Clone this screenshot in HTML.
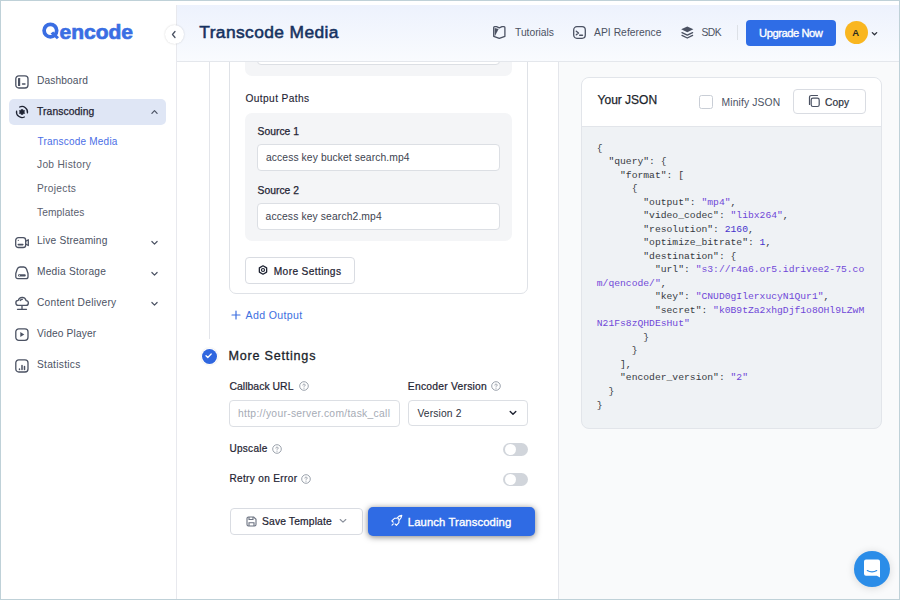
<!DOCTYPE html>
<html><head><meta charset="utf-8"><style>
html,body{margin:0;padding:0;width:900px;height:600px;overflow:hidden;background:#fff}
body{position:relative;font-family:"Liberation Sans",sans-serif}
.t{position:absolute;white-space:nowrap;line-height:1;font-family:"Liberation Sans",sans-serif}
svg{overflow:visible}
</style></head><body>
<div style="position:absolute;left:0px;top:0px;width:900px;height:600px;background:#fff"></div>
<div style="position:absolute;left:176px;top:5px;width:1px;height:594px;background:#e8e9ee"></div>
<div style="position:absolute;left:559px;top:62px;width:340px;height:537px;background:#f9fafb"></div>
<div style="position:absolute;left:558px;top:62px;width:1px;height:537px;background:#e4e6eb"></div>
<div style="position:absolute;left:0px;top:0px;width:900px;height:1px;background:#bfd1d8"></div>
<div style="position:absolute;left:0px;top:599px;width:900px;height:1px;background:#bfd1d8"></div>
<div style="position:absolute;left:0px;top:0px;width:1px;height:600px;background:#bfd1d8"></div>
<div style="position:absolute;left:899px;top:0px;width:1px;height:600px;background:#bfd1d8"></div>
<svg style="position:absolute;left:41px;top:21px" width="20" height="20" viewBox="0 0 20 20"><circle cx="9.4" cy="9.6" r="6.3" fill="none" stroke="#3a6ee3" stroke-width="3.7"/><path d="M9.6 12.6L12.2 10.4 18 16.2 15.9 18.2z" fill="#3a6ee3"/><path d="M9.6 12.6L12.2 10.4" stroke="#fff" stroke-width="0" /></svg>
<div class="t" style="left:59.6px;top:21px;font-size:21.0px;color:#3a6ee3;font-weight:bold;letter-spacing:-0.044px;-webkit-text-stroke:0.7px #3a6ee3;">encode</div>
<div style="position:absolute;left:9px;top:99px;width:157px;height:26px;background:#dfe6f5;border-radius:5px"></div>
<div class="t" style="left:37px;top:76px;font-size:10.2px;color:#4b5263;font-weight:normal;letter-spacing:0.125px;">Dashboard</div>
<div class="t" style="left:37px;top:236px;font-size:10.2px;color:#4b5263;font-weight:normal;letter-spacing:0.182px;">Live Streaming</div>
<div class="t" style="left:37px;top:267px;font-size:10.2px;color:#4b5263;font-weight:normal;letter-spacing:0.222px;">Media Storage</div>
<div class="t" style="left:37px;top:298px;font-size:10.2px;color:#4b5263;font-weight:normal;letter-spacing:0.260px;">Content Delivery</div>
<div class="t" style="left:37px;top:329px;font-size:10.2px;color:#4b5263;font-weight:normal;letter-spacing:0.141px;">Video Player</div>
<div class="t" style="left:37px;top:360px;font-size:10.2px;color:#4b5263;font-weight:normal;letter-spacing:0.277px;">Statistics</div>
<div class="t" style="left:37.1px;top:107px;font-size:10.3px;color:#1f2433;font-weight:normal;letter-spacing:0.080px;-webkit-text-stroke:0.25px #1f2433;">Transcoding</div>
<div class="t" style="left:37.5px;top:137px;font-size:10.0px;color:#4a6ee6;font-weight:normal;letter-spacing:0.215px;">Transcode Media</div>
<div class="t" style="left:37px;top:160px;font-size:10.2px;color:#5a606e;font-weight:normal;letter-spacing:0.298px;">Job History</div>
<div class="t" style="left:37px;top:184px;font-size:10.2px;color:#5a606e;font-weight:normal;letter-spacing:0.293px;">Projects</div>
<div class="t" style="left:37px;top:208px;font-size:10.2px;color:#5a606e;font-weight:normal;letter-spacing:0.114px;">Templates</div>
<svg style="position:absolute;left:15px;top:75px" width="14" height="14" viewBox="0 0 14 14"><rect x="0.8" y="0.8" width="12.2" height="12.2" rx="3" fill="none" stroke="#4b5263" stroke-width="1.3" stroke-linecap="round" stroke-linejoin="round"/><rect x="3" y="3" width="2.2" height="8" rx="0.6" fill="#4b5263"/><path d="M7.5 9h2.5" fill="none" stroke="#4b5263" stroke-width="1.3" stroke-linecap="round" stroke-linejoin="round"/></svg>
<svg style="position:absolute;left:15px;top:105.3px" width="14" height="14" viewBox="0 0 14 14"><path d="M4.68 2.02A5.5 5.5 0 0 1 12.42 7.96M1.58 6.04A5.5 5.5 0 0 0 9.32 11.98" fill="none" stroke="#1f2433" stroke-width="1.3" stroke-linecap="round"/><path d="M7.00 4.00 L8.05 5.18 L9.60 5.50 L9.10 7.00 L9.60 8.50 L8.05 8.82 L7.00 10.00 L5.95 8.82 L4.40 8.50 L4.90 7.00 L4.40 5.50 L5.95 5.18Z" fill="#1f2433" stroke="#1f2433" stroke-width="0.6" stroke-linejoin="round"/></svg>
<svg style="position:absolute;left:15px;top:237px" width="14" height="11" viewBox="0 0 14 11"><rect x="0.7" y="0.7" width="10" height="9.8" rx="2.6" fill="none" stroke="#4b5263" stroke-width="1.3" stroke-linecap="round" stroke-linejoin="round"/><path d="M10.7 4.2l2.6-1.5v5.8l-2.6-1.5" fill="none" stroke="#4b5263" stroke-width="1.3" stroke-linecap="round" stroke-linejoin="round"/><path d="M3.3 7.6h4.5" fill="none" stroke="#4b5263" stroke-width="1.6" stroke-linecap="round"/><circle cx="3.3" cy="3.3" r="0.6" fill="#4b5263"/></svg>
<svg style="position:absolute;left:15px;top:266px" width="14" height="14" viewBox="0 0 14 14"><path d="M0.8 7.5L2.2 3.2C2.7 1.7 3.6 1 5 1h3.8c1.4 0 2.3.7 2.8 2.2L13 7.5v3.2a2 2 0 0 1-2 2H2.8a2 2 0 0 1-2-2z" fill="none" stroke="#4b5263" stroke-width="1.3" stroke-linecap="round" stroke-linejoin="round"/><rect x="3" y="8.3" width="7.8" height="2.2" rx="1.1" fill="#4b5263"/><circle cx="4.4" cy="9.4" r="0.5" fill="#fff"/></svg>
<svg style="position:absolute;left:15px;top:297px" width="14" height="14" viewBox="0 0 14 14"><path d="M3.4 8.4h7.4a2.4 2.4 0 0 0 .3-4.8A4 4 0 0 0 3.3 3.4a2.5 2.5 0 0 0 .1 5z" fill="none" stroke="#4b5263" stroke-width="1.3" stroke-linecap="round" stroke-linejoin="round"/><path d="M5.3 3.4c.5-.8 1.2-1.2 2-1.2" fill="none" stroke="#4b5263" stroke-width="1.5" stroke-linecap="round"/><path d="M7 8.6v3.4M2.5 12.3h9" fill="none" stroke="#4b5263" stroke-width="1.3" stroke-linecap="round" stroke-linejoin="round"/></svg>
<svg style="position:absolute;left:15px;top:328px" width="14" height="13" viewBox="0 0 14 13"><rect x="0.8" y="0.8" width="12.2" height="11.5" rx="3" fill="none" stroke="#4b5263" stroke-width="1.3" stroke-linecap="round" stroke-linejoin="round"/><path d="M5.3 4v5l4-2.5z" fill="#4b5263"/></svg>
<svg style="position:absolute;left:15px;top:359px" width="14" height="14" viewBox="0 0 14 14"><rect x="0.8" y="0.8" width="12.2" height="12.2" rx="3" fill="none" stroke="#4b5263" stroke-width="1.3" stroke-linecap="round" stroke-linejoin="round"/><path d="M4.5 10.5v-0.5M7 10.5v-4M9.5 10.5v-3" fill="none" stroke="#4b5263" stroke-width="1.5" stroke-linecap="round"/></svg>
<svg style="position:absolute;left:150.5px;top:109px" width="7" height="6" viewBox="0 0 7 6"><path d="M0.9 4.3L3.5 1.7l2.6 2.6" fill="none" stroke="#4b5263" stroke-width="1.2" stroke-linecap="round" stroke-linejoin="round"/></svg>
<svg style="position:absolute;left:150.5px;top:239.5px" width="7" height="6" viewBox="0 0 7 6"><path d="M0.9 1.5L3.5 4.1l2.6-2.6" fill="none" stroke="#4b5263" stroke-width="1.2" stroke-linecap="round" stroke-linejoin="round"/></svg>
<svg style="position:absolute;left:150.5px;top:270.5px" width="7" height="6" viewBox="0 0 7 6"><path d="M0.9 1.5L3.5 4.1l2.6-2.6" fill="none" stroke="#4b5263" stroke-width="1.2" stroke-linecap="round" stroke-linejoin="round"/></svg>
<svg style="position:absolute;left:150.5px;top:300.5px" width="7" height="6" viewBox="0 0 7 6"><path d="M0.9 1.5L3.5 4.1l2.6-2.6" fill="none" stroke="#4b5263" stroke-width="1.2" stroke-linecap="round" stroke-linejoin="round"/></svg>
<div style="position:absolute;left:209px;top:62px;width:1px;height:277px;background:#e3e5ea"></div>
<div style="position:absolute;left:229px;top:30px;width:297px;height:261.5px;border:1px solid #dfe2e7;border-radius:7px;background:#fff"></div>
<div style="position:absolute;left:245px;top:40px;width:267px;height:36px;background:#f4f5f7;border-radius:7px"></div>
<div style="position:absolute;left:257px;top:40px;width:241px;height:22.5px;border:1px solid #dcdfe4;border-radius:4px;background:#fff"></div>
<div class="t" style="left:245.5px;top:94px;font-size:10.2px;color:#1f2433;font-weight:normal;letter-spacing:0.378px;-webkit-text-stroke:0.12px #1f2433;">Output Paths</div>
<div style="position:absolute;left:245px;top:113px;width:267px;height:128px;background:#f4f5f7;border-radius:7px"></div>
<div class="t" style="left:257.5px;top:127px;font-size:10.3px;color:#1f2433;font-weight:normal;letter-spacing:0.039px;-webkit-text-stroke:0.25px #1f2433;">Source 1</div>
<div style="position:absolute;left:257px;top:144px;width:241px;height:24.5px;border:1px solid #dcdfe4;border-radius:4px;background:#fff"></div>
<div class="t" style="left:266px;top:153px;font-size:10.3px;color:#3d4350;font-weight:normal;letter-spacing:0.099px;">access key bucket search.mp4</div>
<div class="t" style="left:257.5px;top:186px;font-size:10.3px;color:#1f2433;font-weight:normal;letter-spacing:0.039px;-webkit-text-stroke:0.25px #1f2433;">Source 2</div>
<div style="position:absolute;left:257px;top:203px;width:241px;height:25px;border:1px solid #dcdfe4;border-radius:4px;background:#fff"></div>
<div class="t" style="left:265.6px;top:212px;font-size:10.3px;color:#3d4350;font-weight:normal;letter-spacing:0.131px;">access key search2.mp4</div>
<div style="position:absolute;left:245px;top:257px;width:108px;height:24.5px;border:1px solid #d9dce2;border-radius:4px;background:#fff"></div>
<svg style="position:absolute;left:258px;top:264.5px" width="10" height="10" viewBox="0 0 10 10"><path d="M5.00 0.80 L8.65 2.90 L8.65 7.10 L5.00 9.20 L1.35 7.10 L1.35 2.90Z" fill="none" stroke="#1f2433" stroke-width="1.3" stroke-linejoin="round"/><circle cx="5" cy="5" r="1.5" fill="none" stroke="#1f2433" stroke-width="1.2"/></svg>
<div class="t" style="left:273.75px;top:267px;font-size:10.2px;color:#1f2433;font-weight:normal;letter-spacing:0.364px;-webkit-text-stroke:0.22px #1f2433;">More Settings</div>
<svg style="position:absolute;left:231px;top:310px" width="10" height="10" viewBox="0 0 10 10"><path d="M5 1v8M1 5h8" fill="none" stroke="#3d6fe0" stroke-width="1.2" stroke-linecap="round"/></svg>
<div class="t" style="left:245.5px;top:310px;font-size:10.6px;color:#3d6fe0;font-weight:normal;letter-spacing:0.353px;">Add Output</div>
<div style="position:absolute;left:200.5px;top:347.5px;width:17px;height:17px;border-radius:50%;background:#fff;box-shadow:0 0 1.5px rgba(0,0,0,0.15)"></div>
<div style="position:absolute;left:201.8px;top:348.5px;width:15px;height:15px;border-radius:50%;background:#2f66df"></div>
<svg style="position:absolute;left:204px;top:351px" width="9" height="9" viewBox="0 0 9 9"><path d="M2 4.7l1.8 1.8L7.2 3" fill="none" stroke="#fff" stroke-width="1.3" stroke-linecap="round" stroke-linejoin="round"/></svg>
<div class="t" style="left:228.4px;top:350px;font-size:12.6px;color:#1b1f2b;font-weight:normal;letter-spacing:0.780px;-webkit-text-stroke:0.3px #1b1f2b;">More Settings</div>
<div class="t" style="left:229.5px;top:382px;font-size:10.4px;color:#1f2433;font-weight:normal;letter-spacing:0.038px;-webkit-text-stroke:0.22px #1f2433;">Callback URL</div>
<svg style="position:absolute;left:299px;top:381px" width="10" height="10" viewBox="0 0 10 10"><circle cx="5" cy="5" r="4.3" fill="none" stroke="#9097a3" stroke-width="0.9"/><path d="M3.9 4.1a1.1 1.1 0 1 1 1.6 1c-.4.2-.5.4-.5.8" fill="none" stroke="#9097a3" stroke-width="0.9" stroke-linecap="round"/><circle cx="5" cy="7.3" r="0.5" fill="#9097a3"/></svg>
<div style="position:absolute;left:229px;top:400px;width:169px;height:24.6px;border:1px solid #dcdfe4;border-radius:4px;background:#fff"></div>
<div class="t" style="left:238px;top:409px;font-size:10.3px;color:#a6abb5;font-weight:normal;letter-spacing:0.305px;">http://your-server.com/task_call</div>
<div class="t" style="left:407.8px;top:382px;font-size:10.3px;color:#1f2433;font-weight:normal;letter-spacing:0.244px;-webkit-text-stroke:0.22px #1f2433;">Encoder Version</div>
<svg style="position:absolute;left:491.4px;top:380.5px" width="10" height="10" viewBox="0 0 10 10"><circle cx="5" cy="5" r="4.3" fill="none" stroke="#9097a3" stroke-width="0.9"/><path d="M3.9 4.1a1.1 1.1 0 1 1 1.6 1c-.4.2-.5.4-.5.8" fill="none" stroke="#9097a3" stroke-width="0.9" stroke-linecap="round"/><circle cx="5" cy="7.3" r="0.5" fill="#9097a3"/></svg>
<div style="position:absolute;left:407.5px;top:400px;width:118px;height:24.3px;border:1px solid #dcdfe4;border-radius:4px;background:#fff"></div>
<div class="t" style="left:417.4px;top:409px;font-size:10.3px;color:#2d3340;font-weight:normal;letter-spacing:0.132px;">Version 2</div>
<svg style="position:absolute;left:509px;top:410px" width="8" height="6" viewBox="0 0 8 6"><path d="M1.2 1.5L4 4.3l2.8-2.8" fill="none" stroke="#1f2433" stroke-width="1.4" stroke-linecap="round" stroke-linejoin="round"/></svg>
<div class="t" style="left:229.4px;top:444px;font-size:10.0px;color:#1f2433;font-weight:normal;letter-spacing:0.312px;-webkit-text-stroke:0.22px #1f2433;">Upscale</div>
<svg style="position:absolute;left:272px;top:443.7px" width="10" height="10" viewBox="0 0 10 10"><circle cx="5" cy="5" r="4.3" fill="none" stroke="#9097a3" stroke-width="0.9"/><path d="M3.9 4.1a1.1 1.1 0 1 1 1.6 1c-.4.2-.5.4-.5.8" fill="none" stroke="#9097a3" stroke-width="0.9" stroke-linecap="round"/><circle cx="5" cy="7.3" r="0.5" fill="#9097a3"/></svg>
<div class="t" style="left:229.4px;top:474px;font-size:10.0px;color:#1f2433;font-weight:normal;letter-spacing:0.370px;-webkit-text-stroke:0.22px #1f2433;">Retry on Error</div>
<svg style="position:absolute;left:301.4px;top:474.2px" width="10" height="10" viewBox="0 0 10 10"><circle cx="5" cy="5" r="4.3" fill="none" stroke="#9097a3" stroke-width="0.9"/><path d="M3.9 4.1a1.1 1.1 0 1 1 1.6 1c-.4.2-.5.4-.5.8" fill="none" stroke="#9097a3" stroke-width="0.9" stroke-linecap="round"/><circle cx="5" cy="7.3" r="0.5" fill="#9097a3"/></svg>
<div style="position:absolute;left:503px;top:443px;width:25px;height:13px;background:#d1d5db;border-radius:7px"></div>
<div style="position:absolute;left:505px;top:444px;width:11px;height:11px;border-radius:50%;background:#fff"></div>
<div style="position:absolute;left:503px;top:473px;width:25px;height:13px;background:#d1d5db;border-radius:7px"></div>
<div style="position:absolute;left:505px;top:474px;width:11px;height:11px;border-radius:50%;background:#fff"></div>
<div style="position:absolute;left:230px;top:508px;width:131px;height:25px;border:1px solid #d9dce2;border-radius:4px;background:#fff"></div>
<svg style="position:absolute;left:246px;top:516px" width="11" height="11" viewBox="0 0 11 11"><path d="M1 2.5A1.5 1.5 0 0 1 2.5 1h5.2L10 3.3v5.2A1.5 1.5 0 0 1 8.5 10h-6A1.5 1.5 0 0 1 1 8.5z" fill="none" stroke="#6b7280" stroke-width="1.1"/><path d="M3 1v2.5h4V1M3 10V6.8h5V10" fill="none" stroke="#6b7280" stroke-width="1.1"/></svg>
<div class="t" style="left:262px;top:517px;font-size:10.3px;color:#1f2433;font-weight:normal;letter-spacing:0.146px;-webkit-text-stroke:0.22px #1f2433;">Save Template</div>
<svg style="position:absolute;left:339px;top:518px" width="8" height="6" viewBox="0 0 8 6"><path d="M1.2 1.5L4 4.2l2.8-2.7" fill="none" stroke="#8a909b" stroke-width="1.1" stroke-linecap="round" stroke-linejoin="round"/></svg>
<div style="position:absolute;left:368px;top:507px;width:167px;height:29px;border-radius:5px;background:#2f6be4;box-shadow:0 1px 6px rgba(0,0,0,0.5)"></div>
<svg style="position:absolute;left:390px;top:514px" width="13" height="13" viewBox="0 0 13 13"><path d="M3.5 8.5L1.8 6.8 4.5 4.3h2.2C8.5 2.3 10.3 1.5 11.8 1.4c-.1 1.5-.9 3.3-2.9 5.1v2.2L6.4 11.4 4.7 9.7" fill="none" stroke="#fff" stroke-width="1.1" stroke-linejoin="round"/><path d="M3.3 9.9l-1.3 1.3" stroke="#fff" stroke-width="1.1" stroke-linecap="round"/><circle cx="8.4" cy="4.8" r="0.9" fill="#fff"/></svg>
<div class="t" style="left:407.8px;top:517px;font-size:11.3px;color:#fff;font-weight:normal;letter-spacing:0.096px;-webkit-text-stroke:0.35px #fff;">Launch Transcoding</div>
<div style="position:absolute;left:581px;top:77px;width:299px;height:350px;border:1px solid #e2e5ea;border-radius:8px;background:#eff2f5;overflow:hidden"><div style="position:absolute;left:0;top:0;right:0;height:48px;background:#fff;border-bottom:1px solid #e2e5ea"></div></div>
<div class="t" style="left:597.6px;top:94px;font-size:12.0px;color:#1b1f2b;font-weight:normal;letter-spacing:-0.011px;-webkit-text-stroke:0.25px #1b1f2b;">Your JSON</div>
<div style="position:absolute;left:699px;top:95px;width:11.5px;height:11.5px;border:1px solid #c9ced6;border-radius:2.5px;background:#fff"></div>
<div class="t" style="left:721.5px;top:98px;font-size:10.3px;color:#4b5263;font-weight:normal;letter-spacing:0.147px;">Minify JSON</div>
<div style="position:absolute;left:793px;top:89px;width:71px;height:22.5px;border:1px solid #d9dce2;border-radius:4px;background:#fff"></div>
<svg style="position:absolute;left:807px;top:94px" width="14" height="14" viewBox="0 0 14 14"><rect x="4.2" y="4.2" width="8" height="8.3" rx="1.8" fill="none" stroke="#4b5263" stroke-width="1.2"/><path d="M2.5 10.5V3.3A1.8 1.8 0 0 1 4.3 1.5h6.2" fill="none" stroke="#4b5263" stroke-width="1.2" stroke-linecap="round"/></svg>
<div class="t" style="left:825px;top:98px;font-size:10.2px;color:#2d3340;font-weight:normal;letter-spacing:0.063px;-webkit-text-stroke:0.22px #2d3340;">Copy</div>
<div style="position:absolute;left:596.8px;top:143.71px;font-family:'Liberation Mono',monospace;font-size:9.7px;line-height:13.53px;white-space:pre"><div style="height:13.53px;line-height:9.7px"><span style="color:#363a42">{</span></div><div style="height:13.53px;line-height:9.7px"><span style="color:#363a42">  "query": {</span></div><div style="height:13.53px;line-height:9.7px"><span style="color:#363a42">    "format": [</span></div><div style="height:13.53px;line-height:9.7px"><span style="color:#363a42">      {</span></div><div style="height:13.53px;line-height:9.7px"><span style="color:#363a42">        "output": </span><span style="color:#7048d8">"mp4"</span><span style="color:#363a42">,</span></div><div style="height:13.53px;line-height:9.7px"><span style="color:#363a42">        "video_codec": </span><span style="color:#7048d8">"libx264"</span><span style="color:#363a42">,</span></div><div style="height:13.53px;line-height:9.7px"><span style="color:#363a42">        "resolution": </span><span style="color:#4632cc">2160</span><span style="color:#363a42">,</span></div><div style="height:13.53px;line-height:9.7px"><span style="color:#363a42">        "optimize_bitrate": </span><span style="color:#4632cc">1</span><span style="color:#363a42">,</span></div><div style="height:13.53px;line-height:9.7px"><span style="color:#363a42">        "destination": {</span></div><div style="height:13.53px;line-height:9.7px"><span style="color:#363a42">          "url": </span><span style="color:#7048d8">"s3://r4a6.or5.idrivee2-75.co</span></div><div style="height:13.53px;line-height:9.7px"><span style="color:#7048d8">m/qencode/"</span><span style="color:#363a42">,</span></div><div style="height:13.53px;line-height:9.7px"><span style="color:#363a42">          "key": </span><span style="color:#7048d8">"CNUD0gIlerxucyN1Qur1"</span><span style="color:#363a42">,</span></div><div style="height:13.53px;line-height:9.7px"><span style="color:#363a42">          "secret": </span><span style="color:#7048d8">"k0B9tZa2xhgDjf1o8OHl9LZwM</span></div><div style="height:13.53px;line-height:9.7px"><span style="color:#7048d8">N21Fs8zQHDEsHut"</span></div><div style="height:13.53px;line-height:9.7px"><span style="color:#363a42">        }</span></div><div style="height:13.53px;line-height:9.7px"><span style="color:#363a42">      }</span></div><div style="height:13.53px;line-height:9.7px"><span style="color:#363a42">    ],</span></div><div style="height:13.53px;line-height:9.7px"><span style="color:#363a42">    "encoder_version": </span><span style="color:#7048d8">"2"</span></div><div style="height:13.53px;line-height:9.7px"><span style="color:#363a42">  }</span></div><div style="height:13.53px;line-height:9.7px"><span style="color:#363a42">}</span></div></div>
<div style="position:absolute;left:854px;top:550.5px;width:36px;height:36px;border-radius:50%;background:#2b8de8;box-shadow:0 1px 8px rgba(0,0,0,0.14)"></div>
<svg style="position:absolute;left:863px;top:558.5px" width="18" height="19" viewBox="0 0 18 19"><path d="M3 0.5h12a2 2 0 0 1 2 2v16l-3.2-1.8H3a2 2 0 0 1-2-2V2.5a2 2 0 0 1 2-2z" fill="#fff"/><path d="M4.3 11.6c2.6 1.7 6.8 1.7 9.4 0" fill="none" stroke="#2d8ce5" stroke-width="1.2" stroke-linecap="round"/></svg>
<div style="position:absolute;left:177px;top:5px;width:722px;height:56px;background:linear-gradient(180deg,#edf2fd 0%,#f9fbfe 100%)"></div>
<div style="position:absolute;left:177px;top:61px;width:722px;height:1px;background:#e4e7ec"></div>
<div style="position:absolute;left:164.5px;top:24.5px;width:19px;height:19px;border-radius:50%;background:#fff;box-shadow:0 0 2px rgba(0,0,0,0.18)"></div>
<svg style="position:absolute;left:170px;top:30px" width="8" height="9" viewBox="0 0 8 9"><path d="M5 1.5L2.5 4.5 5 7.5" fill="none" stroke="#4b5263" stroke-width="1.3" stroke-linecap="round" stroke-linejoin="round"/></svg>
<div class="t" style="left:199.3px;top:24px;font-size:17.4px;color:#163261;font-weight:normal;letter-spacing:0.394px;-webkit-text-stroke:0.55px #163261;">Transcode Media</div>
<svg style="position:absolute;left:493px;top:26px" width="13" height="13" viewBox="0 0 13 13"><path d="M0.7 1.6Q0.7 0.7 1.6 0.7H3.6L6.3 1.8 9 0.7H11Q11.9 0.7 11.9 1.6V10.3L6.3 12.4 0.7 10.3Z" fill="none" stroke="#4b5263" stroke-width="1.3" stroke-linecap="round" stroke-linejoin="round"/><path d="M1.7 2L5.6 2.9 1.7 10.4z" fill="#4b5263"/></svg>
<div class="t" style="left:515px;top:28px;font-size:10.3px;color:#4b5263;font-weight:normal;letter-spacing:-0.014px;">Tutorials</div>
<svg style="position:absolute;left:573px;top:26px" width="13" height="13" viewBox="0 0 13 13"><rect x="0.7" y="0.7" width="11.6" height="11.6" rx="3.2" fill="none" stroke="#4b5263" stroke-width="1.3" stroke-linecap="round" stroke-linejoin="round"/><path d="M3.3 5.3l2.2 1.7-2.2 1.7" fill="none" stroke="#4b5263" stroke-width="1.4" stroke-linecap="round" stroke-linejoin="round"/><path d="M6.7 9.3h2.8" fill="none" stroke="#4b5263" stroke-width="1.4" stroke-linecap="round"/></svg>
<div class="t" style="left:594px;top:28px;font-size:10.3px;color:#4b5263;font-weight:normal;letter-spacing:0.043px;">API Reference</div>
<svg style="position:absolute;left:680.5px;top:26px" width="13" height="13" viewBox="0 0 13 13"><path d="M6.3 0.4L12.4 3.3 6.3 6.2 0.2 3.3z" fill="#4b5263"/><path d="M1 6.6L6.3 9.2 11.6 6.6M1 9.4L6.3 12 11.6 9.4" fill="none" stroke="#4b5263" stroke-width="1.3" stroke-linecap="round" stroke-linejoin="round"/></svg>
<div class="t" style="left:701.6px;top:28px;font-size:10.3px;color:#4b5263;font-weight:normal;letter-spacing:-0.589px;">SDK</div>
<div style="position:absolute;left:737px;top:25px;width:1px;height:15px;background:#dde1e7"></div>
<div style="position:absolute;left:746px;top:20px;width:90px;height:26px;background:#2f6de6;border-radius:4px"></div>
<div class="t" style="left:759px;top:28px;font-size:11.2px;color:#fff;font-weight:normal;letter-spacing:-0.448px;-webkit-text-stroke:0.35px #fff;">Upgrade Now</div>
<div style="position:absolute;left:845px;top:21.2px;width:23.3px;height:23.3px;border-radius:50%;background:#f9b620"></div>
<div class="t" style="left:852.3px;top:28px;font-size:9.5px;color:#2b2b1f;font-weight:bold;letter-spacing:0.000px;">A</div>
<svg style="position:absolute;left:870.5px;top:30.5px" width="7" height="6" viewBox="0 0 7 6"><path d="M1.3 1.6L3.5 3.8l2.2-2.2" fill="none" stroke="#2b2f3a" stroke-width="1.3" stroke-linecap="round" stroke-linejoin="round"/></svg>
</body></html>
